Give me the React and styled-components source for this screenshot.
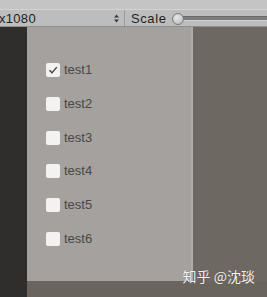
import styled, { createGlobalStyle } from "styled-components"

const Global = createGlobalStyle`
    body {
        margin: 0;
        font-family: "Liberation Sans", Arial, sans-serif;
    }
`

const Screen = styled.div`
    position: relative;
    width: 267px;
    height: 297px;
    overflow: hidden;
    display: flex;
    flex-direction: column;
    background: #2f2e2c;
`

const TopStrip = styled.div`
    height: 9px;
    background: #c4c4c4;
    border-bottom: 1px solid #d2d2d2;
`

const Toolbar = styled.div`
    height: 16px;
    display: flex;
    align-items: center;
    background: #bdbdbd;
    border-bottom: 1px solid #8e8e8e;
    font-size: 13px;
    color: #1f1f1f;
`

const Resolution = styled.div`
    width: 126px;
    display: flex;
    align-items: center;
    justify-content: space-between;
    padding-right: 5px;
    box-sizing: border-box;
    margin-left: -1px;
    height: 100%;
    border-right: 1px solid #9a9a9a;
    letter-spacing: 0.3px;
`

const ScaleLabel = styled.span`
    margin-left: 6px;
    letter-spacing: 0.6px;
`

const Slider = styled.div`
    position: relative;
    flex: 1;
    height: 100%;
    margin-left: 5px;
    display: flex;
    align-items: center;
`

const Track = styled.div`
    flex: 1;
    height: 3px;
    margin-left: 6px;
    background: #7d7d7d;
    border-top: 1px solid #6a6a6a;
    border-bottom: 1px solid #d0d0d0;
`

const Knob = styled.div`
    position: absolute;
    left: 0;
    top: 3px;
    width: 10px;
    height: 10px;
    border-radius: 50%;
    background: radial-gradient(circle at 40% 35%, #e8e8e8, #b4b4b4);
    border: 1px solid #7a7a7a;
`

const Main = styled.div`
    flex: 1;
    display: flex;
`

const LeftStrip = styled.div`
    width: 27px;
    background: #2f2e2c;
`

const Stage = styled.div`
    flex: 1;
    display: flex;
    flex-direction: column;
`

const Canvas = styled.div`
    flex: 1;
    display: flex;
`

const Panel = styled.div`
    width: 166px;
    background: #a4a19e;
    border-right: 2px solid #aeaba8;
    padding: 36px 0 0 19px;
    box-sizing: border-box;
    display: flex;
    flex-direction: column;
`

const Backdrop = styled.div`
    flex: 1;
    background: #6e6862;
`

const BottomBar = styled.div`
    height: 16px;
    background: #6a645e;
`

const Row = styled.label`
    height: 33.8px;
    display: flex;
    align-items: flex-start;
`

const Box = styled.span`
    width: 14px;
    height: 14px;
    border-radius: 2px;
    background: #f3f2f1;
    display: flex;
    align-items: center;
    justify-content: center;
`

const Label = styled.span`
    margin-left: 4px;
    font-size: 13px;
    line-height: 14px;
    color: #4a4845;
`

const Watermark = styled.div`
    position: absolute;
    right: 12px;
    bottom: 13px;
    font-family: "Noto Sans CJK SC", sans-serif;
    font-size: 14px;
    line-height: 15px;
    color: #f4f2f0;
    text-shadow: 0 0 1px rgba(0, 0, 0, 0.4);
`

const items = ["test1", "test2", "test3", "test4", "test5", "test6"]

export default function App() {
    return (
        <Screen>
            <Global />
            <TopStrip />
            <Toolbar>
                <Resolution>
                    <span>x1080</span>
                    <svg width="5" height="9" viewBox="0 0 5 9">
                        <path d="M0 3.5 L2.5 0.5 L5 3.5 Z M0 5.5 L2.5 8.5 L5 5.5 Z" fill="#3a3a3a" />
                    </svg>
                </Resolution>
                <ScaleLabel>Scale</ScaleLabel>
                <Slider>
                    <Track />
                    <Knob />
                </Slider>
            </Toolbar>
            <Main>
                <LeftStrip />
                <Stage>
                    <Canvas>
                        <Panel>
                            {items.map((name, i) => (
                                <Row key={name}>
                                    <Box>
                                        {i === 0 && (
                                            <svg width="10" height="10" viewBox="0 0 10 10">
                                                <path d="M1.5 5.2 L4 7.8 L8.8 2.2" fill="none" stroke="#3a3836" strokeWidth="1.3" />
                                            </svg>
                                        )}
                                    </Box>
                                    <Label>{name}</Label>
                                </Row>
                            ))}
                        </Panel>
                        <Backdrop />
                    </Canvas>
                    <BottomBar />
                </Stage>
            </Main>
            <Watermark>知乎 @沈琰</Watermark>
        </Screen>
    )
}
